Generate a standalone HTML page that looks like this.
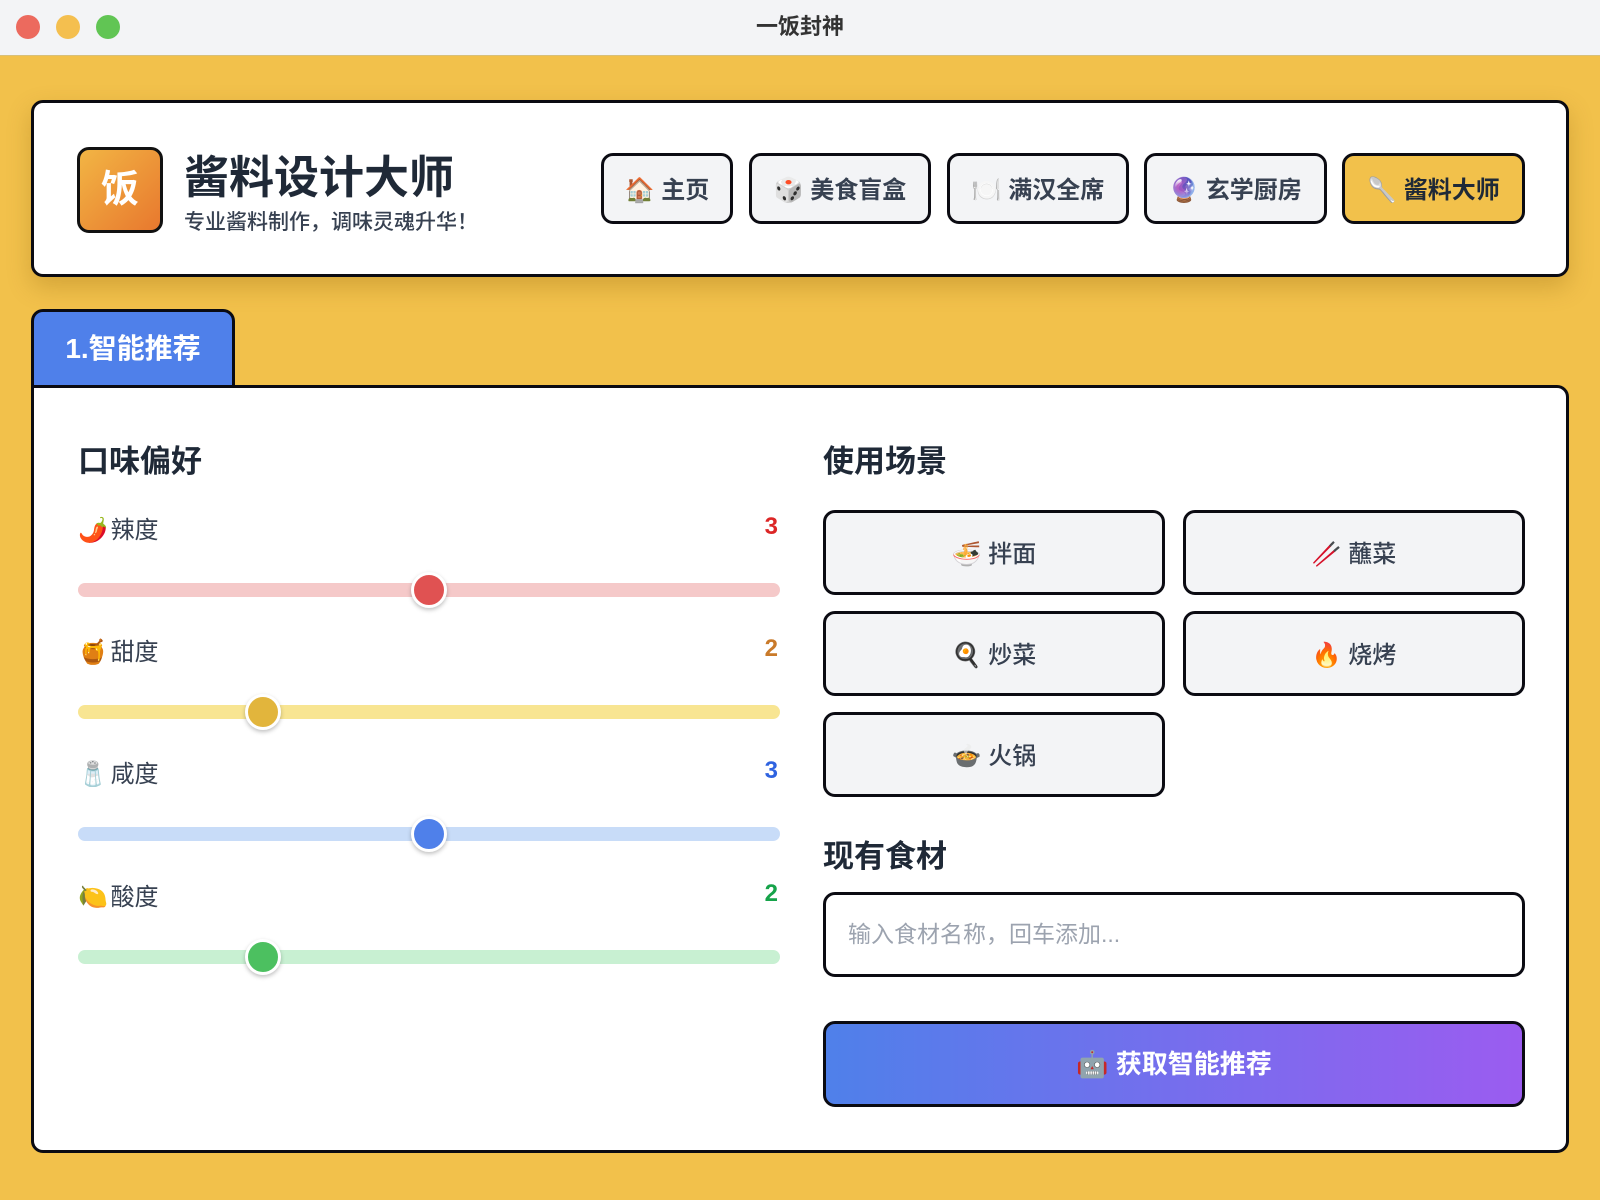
<!DOCTYPE html>
<html><head><meta charset="utf-8"><style>
*{box-sizing:border-box;margin:0;padding:0}
body{width:1600px;height:1200px;overflow:hidden;background:#f2c14b;font-family:"Liberation Sans","Noto Sans CJK SC",sans-serif;color:#1f2937;position:relative}
.tb{position:absolute;left:0;top:0;width:1600px;height:56px;background:#f3f4f6;border-bottom:1px solid #d8c07a}
.dot{position:absolute;top:15px;width:24px;height:24px;border-radius:50%}
.tt{position:absolute;top:0;left:0;width:1600px;text-align:center;line-height:54px;font-size:22px;font-weight:bold;color:#333}
.card{position:absolute;background:#fff;border:3px solid #0b0b12;border-radius:12px}
.hdr{left:31px;top:100px;width:1538px;height:177px;box-shadow:0 10px 24px rgba(120,80,0,.25)}
.logo{position:absolute;left:43px;top:44px;width:86px;height:86px;border:3px solid #111;border-radius:12px;background:linear-gradient(135deg,#f2b544,#e8782e);color:#fff;font-size:38px;font-weight:bold;text-align:center;line-height:80px}
.h1{position:absolute;left:150px;top:48px;font-size:45px;font-weight:bold;line-height:54px;color:#1f2937}
.sub{position:absolute;left:150px;top:103px;font-size:21px;color:#374151;font-weight:500}
.nav{position:absolute;top:50px;height:71px;border:3px solid #0b0b12;border-radius:12px;background:#f3f4f6;font-size:24px;font-weight:bold;color:#374151;text-align:center;line-height:69px}
.tab{position:absolute;left:31px;top:309px;width:204px;height:80px;background:#4f80ea;border:3px solid #0b0b12;border-bottom:none;border-radius:12px 12px 0 0;color:#fff;font-size:28px;font-weight:bold;line-height:74px;text-align:center}
.main{left:31px;top:385px;width:1538px;height:768px;border-top-left-radius:0}
.h2{position:absolute;font-size:31px;font-weight:bold;color:#1f2937}
.lab{position:absolute;left:44px;font-size:24px;color:#374151;letter-spacing:-2px}
.lab span{letter-spacing:0}
.val{position:absolute;right:788px;font-size:24px;font-weight:bold}
.trk{position:absolute;left:44px;width:702px;height:14px;border-radius:7px}
.th{position:absolute;width:36px;height:36px;border-radius:50%;border:3px solid #fff;box-shadow:0 2px 4px rgba(0,0,0,.25)}
.sc{position:absolute;width:342px;height:85px;border:3px solid #0b0b12;border-radius:12px;background:#f3f4f6;font-size:24px;color:#374151;text-align:center;line-height:83px;font-weight:500}
.inp{position:absolute;left:789px;top:504px;width:702px;height:85px;border:3px solid #0b0b12;border-radius:12px;font-size:23px;color:#9ca3af;line-height:79px;padding-left:22px}
.btn{position:absolute;left:789px;top:633px;width:702px;height:86px;border:3px solid #0b0b12;border-radius:12px;background:linear-gradient(90deg,#4f80ea,#9b5cf0);color:#fff;font-size:26px;font-weight:bold;text-align:center;line-height:80px}
</style></head><body>
<div class="tb"><div class="dot" style="left:16px;background:#ec6a5e"></div><div class="dot" style="left:56px;background:#f4bf4f"></div><div class="dot" style="left:96px;background:#61c554"></div><div class="tt">一饭封神</div></div>
<div class="card hdr">
<div class="logo">饭</div>
<div class="h1">酱料设计大师</div>
<div class="sub">专业酱料制作，调味灵魂升华！</div>
<div class="nav" style="left:567px;width:132px">🏠 主页</div>
<div class="nav" style="left:715px;width:182px">🎲 美食盲盒</div>
<div class="nav" style="left:913px;width:182px">🍽️ 满汉全席</div>
<div class="nav" style="left:1110px;width:183px">🔮 玄学厨房</div>
<div class="nav" style="left:1308px;width:183px;background:#f2c14b;color:#1f2937">🥄 酱料大师</div>
</div>
<div class="tab">1.智能推荐</div>
<div class="card main">
<div class="h2" style="left:44px;top:48px">口味偏好</div>
<div class="lab" style="top:122px">🌶️ <span>辣度</span></div><div class="val" style="top:125px;color:#dc2626">3</div>
<div class="trk" style="top:195px;background:#f5c9c9"></div><div class="th" style="left:377px;top:184px;background:#e05252"></div>
<div class="lab" style="top:244px">🍯 <span>甜度</span></div><div class="val" style="top:247px;color:#c97a2a">2</div>
<div class="trk" style="top:317px;background:#f8e592"></div><div class="th" style="left:211px;top:306px;background:#e2b53c"></div>
<div class="lab" style="top:366px">🧂 <span>咸度</span></div><div class="val" style="top:369px;color:#2f63e0">3</div>
<div class="trk" style="top:439px;background:#c8dcf8"></div><div class="th" style="left:377px;top:428px;background:#4f80ea"></div>
<div class="lab" style="top:489px">🍋 <span>酸度</span></div><div class="val" style="top:492px;color:#16a34a">2</div>
<div class="trk" style="top:562px;background:#c8f0d2"></div><div class="th" style="left:211px;top:551px;background:#4cc060"></div>
<div class="h2" style="left:789px;top:48px">使用场景</div>
<div class="sc" style="left:789px;top:122px">🍜 拌面</div>
<div class="sc" style="left:1149px;top:122px">🥢 蘸菜</div>
<div class="sc" style="left:789px;top:223px">🍳 炒菜</div>
<div class="sc" style="left:1149px;top:223px">🔥 烧烤</div>
<div class="sc" style="left:789px;top:324px">🍲 火锅</div>
<div class="h2" style="left:789px;top:443px">现有食材</div>
<div class="inp">输入食材名称，回车添加...</div>
<div class="btn">🤖 获取智能推荐</div>
</div>
</body></html>
